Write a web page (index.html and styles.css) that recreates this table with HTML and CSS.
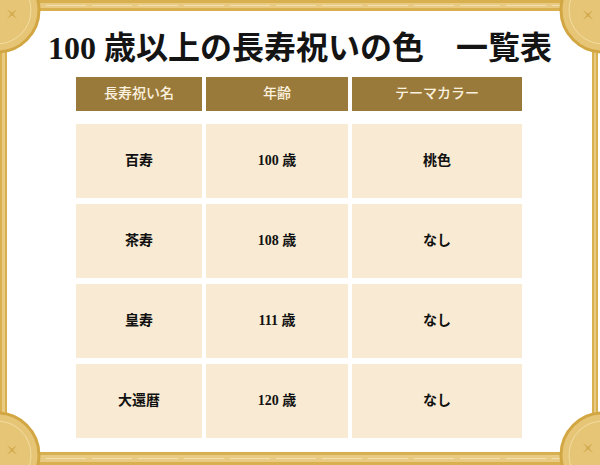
FILE: index.html
```html
<!DOCTYPE html>
<html lang="ja">
<head>
<meta charset="utf-8">
<title>100歳以上の長寿祝いの色 一覧表</title>
<link rel="stylesheet" href="styles.css">
</head>
<body>
<div class="page">
  <svg class="frame" width="600" height="465" viewBox="0 0 600 465" aria-hidden="true">
    <defs>
      <g id="star">
        <path d="M-5,-5 L0,-1.2 L5,-5 L1.2,0 L5,5 L0,1.2 L-5,5 L-1.2,0 Z" fill="#c99d3c" opacity="0.7"/>
      </g>
    </defs>
    <rect x="0" y="0" width="600" height="11" fill="#d8b050"/>
    <rect x="0" y="3" width="600" height="5" fill="#e8ca82"/>
    <line x1="0" y1="5.5" x2="600" y2="5.5" stroke="#f3e0b0" stroke-width="1" stroke-dasharray="40 6"/>
    <rect x="0" y="452" width="600" height="13" fill="#d8b050"/>
    <rect x="0" y="455" width="600" height="7" fill="#e8ca82"/>
    <line x1="0" y1="458.5" x2="600" y2="458.5" stroke="#f3e0b0" stroke-width="1" stroke-dasharray="40 6"/>
    <rect x="0" y="0" width="7" height="465" fill="#d8b050"/>
    <rect x="2" y="0" width="3" height="465" fill="#e8ca82"/>
    <rect x="592" y="0" width="6" height="465" fill="#d8b050"/>
    <rect x="594" y="0" width="2" height="465" fill="#e8ca82"/>
    <g>
      <circle cx="-3" cy="10" r="42" fill="#e6c676" stroke="#d2a743" stroke-width="3"/>
      <circle cx="-3" cy="10" r="34" fill="none" stroke="#f2dca0" stroke-width="1"/>
      <use href="#star" x="12" y="14"/>
    </g>
    <g>
      <circle cx="603" cy="10" r="42" fill="#e6c676" stroke="#d2a743" stroke-width="3"/>
      <circle cx="603" cy="10" r="34" fill="none" stroke="#f2dca0" stroke-width="1"/>
      <use href="#star" x="588" y="15"/>
    </g>
    <g>
      <circle cx="-3" cy="455" r="42" fill="#e6c676" stroke="#d2a743" stroke-width="3"/>
      <circle cx="-3" cy="455" r="34" fill="none" stroke="#f2dca0" stroke-width="1"/>
      <use href="#star" x="12" y="450"/>
    </g>
    <g>
      <circle cx="603" cy="455" r="42" fill="#e6c676" stroke="#d2a743" stroke-width="3"/>
      <circle cx="603" cy="455" r="34" fill="none" stroke="#f2dca0" stroke-width="1"/>
      <use href="#star" x="588" y="448"/>
    </g>
  </svg>

  <h1 class="title">100 歳以上の長寿祝いの色　一覧表</h1>

  <div class="table">
    <div class="row head">
      <div class="cell">長寿祝い名</div>
      <div class="cell">年齢</div>
      <div class="cell">テーマカラー</div>
    </div>
    <div class="body">
      <div class="row">
        <div class="cell">百寿</div>
        <div class="cell">100 歳</div>
        <div class="cell">桃色</div>
      </div>
      <div class="row">
        <div class="cell">茶寿</div>
        <div class="cell">108 歳</div>
        <div class="cell">なし</div>
      </div>
      <div class="row">
        <div class="cell">皇寿</div>
        <div class="cell">111 歳</div>
        <div class="cell">なし</div>
      </div>
      <div class="row">
        <div class="cell">大還暦</div>
        <div class="cell">120 歳</div>
        <div class="cell">なし</div>
      </div>
    </div>
  </div>
</div>
</body>
</html>
```

FILE: styles.css
```css
* { box-sizing: border-box; }

html, body {
  margin: 0;
  padding: 0;
  background: #ffffff;
}

.page {
  position: relative;
  width: 600px;
  height: 465px;
  overflow: hidden;
  padding-top: 29px;
  font-family: "Liberation Serif", "Noto Sans CJK JP", serif;
  color: #111111;
}

.frame {
  position: absolute;
  left: 0;
  top: 0;
  z-index: 0;
}

.title {
  position: relative;
  margin: 0;
  font-size: 32px;
  line-height: 38px;
  font-weight: 700;
  text-align: center;
  color: #141414;
}

.table {
  position: relative;
  width: 446px;
  margin: 10px 0 0 76px;
}

.row {
  display: grid;
  grid-template-columns: 126px 142px 170px;
  column-gap: 4px;
}

.head .cell {
  height: 34px;
  background: #9a7a3a;
  color: #faf1df;
  font-size: 14px;
  font-weight: 500;
}

.body {
  display: grid;
  row-gap: 6px;
  margin-top: 13px;
}

.body .cell {
  height: 74px;
  background: #f9ebd3;
  font-size: 14px;
  font-weight: 700;
}

.cell {
  display: flex;
  align-items: center;
  justify-content: center;
  line-height: 1;
}
```
